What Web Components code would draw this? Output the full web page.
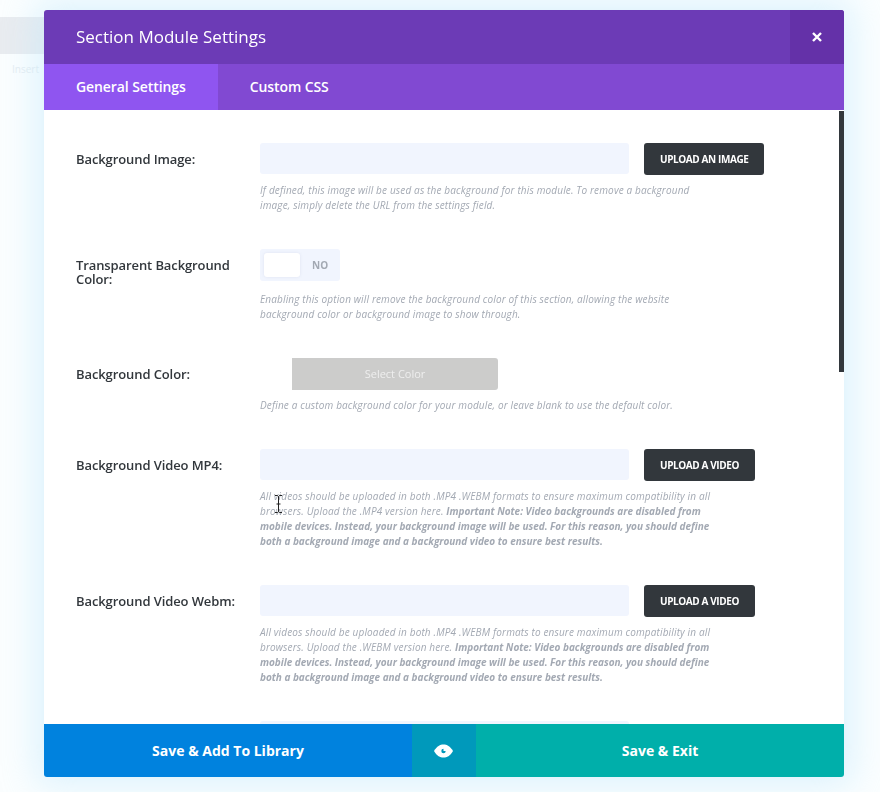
<!DOCTYPE html>
<html>
<head>
<meta charset="utf-8">
<title>Section Module Settings</title>
<style>
  html { background: #fff; }
  html, body { margin: 0; height: 100%; overflow: hidden; }
  body { font-family: "Open Sans", sans-serif; }
</style>
</head>
<body>
<template id="row-tpl">
  <style>
    :host { display: grid; grid-template-columns: 184px 1fr; margin-bottom: 36.5px; }
    .label { font-size: 13px; font-weight: 600; line-height: 14px; letter-spacing: -.1px; color: #32373c; padding-top: 9px; padding-right: 20px; }
    .control { display: flex; align-items: flex-start; gap: 15px; height: 32px; }
    .desc { width: 460px; margin-top: var(--desc-gap, 7.5px); font-size: 10px; line-height: 15px; font-style: italic; color: #a3a9b3; letter-spacing: .15px; }
    ::slotted(b) { font-weight: 700; letter-spacing: -.02px; }
  </style>
  <div class="label"><slot name="label"></slot></div>
  <div>
    <div class="control"><slot name="control"></slot></div>
    <div class="desc"><slot></slot></div>
  </div>
</template>

<script>
class PageBackdrop extends HTMLElement {
  constructor() {
    super();
    this.attachShadow({ mode: "open" });
    this.shadowRoot.innerHTML = `
      <style>
        :host { display: block; position: fixed; inset: 0; z-index: -1; background: #fbfeff; }
        .bar { width: 44px; height: 37px; margin-top: 17px; background: #e9ecf0; }
        .txt { font-size: 10px; line-height: 15px; color: #e6edf2; padding-left: 12px; }
      </style>
      <div class="bar"></div>
      <div class="txt" style="margin-top:8px">Insert</div>
    `;
  }
}
customElements.define("page-backdrop", PageBackdrop);

class ModalHeader extends HTMLElement {
  constructor() {
    super();
    this.attachShadow({ mode: "open" });
    this.shadowRoot.innerHTML = `
      <style>
        :host { display: flex; height: 54px; background: #6c3bb6; color: #fff; align-items: center; border-radius: 3px 3px 0 0; overflow: hidden; }
        h1 { flex: 1; margin: 0; padding: 0 0 2px 32px; font-size: 17px; font-weight: 400; }
        .close { width: 54px; height: 54px; background: #6431a8; display: flex; align-items: center; justify-content: center; }
      </style>
      <h1><slot></slot></h1>
      <div class="close">
        <svg width="10" height="10" viewBox="0 0 10 10"><path d="M1 1l8 8M9 1l-8 8" stroke="#fff" stroke-width="2.4" fill="none"/></svg>
      </div>
    `;
  }
}
customElements.define("modal-header", ModalHeader);

class ModalTabs extends HTMLElement {
  constructor() {
    super();
    this.attachShadow({ mode: "open" });
    this.shadowRoot.innerHTML = `
      <style>
        :host { display: flex; height: 46px; background: #8149d2; }
        ::slotted(span) { display: flex; align-items: center; padding: 0 32px 2px; font-size: 14px; font-weight: 600; letter-spacing: -.09px; color: #fff; }
        ::slotted(span.active) { background: #8f55f0; }
      </style>
      <slot></slot>
    `;
  }
}
customElements.define("modal-tabs", ModalTabs);

class SettingRow extends HTMLElement {
  constructor() {
    super();
    this.attachShadow({ mode: "open" });
    this.shadowRoot.appendChild(document.getElementById("row-tpl").content.cloneNode(true));
  }
}
customElements.define("setting-row", SettingRow);

class UploadField extends HTMLElement {
  constructor() {
    super();
    this.attachShadow({ mode: "open" });
    this.shadowRoot.innerHTML = `
      <style>
        :host { display: flex; gap: 15px; align-items: flex-start; }
        :host([bare]) .btn { display: none; }
        .input { width: 369px; height: 31px; background: #f1f5fe; border-radius: 3px; }
        .btn { height: 32px; padding: 0 16px; background: #32373c; border-radius: 3px; color: #fff; font-size: 10px; font-weight: 700; display: flex; align-items: center; white-space: nowrap; letter-spacing: -.4px; }
      </style>
      <div class="input"></div>
      <div class="btn"><slot></slot></div>
    `;
  }
}
customElements.define("upload-field", UploadField);

class ToggleSwitch extends HTMLElement {
  constructor() {
    super();
    this.attachShadow({ mode: "open" });
    this.shadowRoot.innerHTML = `
      <style>
        :host { display: flex; width: 80px; height: 32px; background: #f1f5fe; border-radius: 3px; align-items: center; box-sizing: border-box; padding-left: 4px; }
        .knob { width: 36px; height: 24px; background: #fff; border-radius: 3px; box-shadow: 0 0 3px rgba(120,130,160,.15); }
        .txt { margin-left: 12px; font-size: 10px; font-weight: 700; color: #a3a9b3; }
      </style>
      <div class="knob"></div>
      <div class="txt">NO</div>
    `;
  }
}
customElements.define("toggle-switch", ToggleSwitch);

class ColorPicker extends HTMLElement {
  constructor() {
    super();
    this.attachShadow({ mode: "open" });
    this.shadowRoot.innerHTML = `
      <style>
        :host { display: block; padding-left: 32px; }
        .btn { box-sizing: border-box; width: 206px; height: 32px; padding-bottom: 2px; background: #cccccb; border-radius: 0 3px 3px 0; color: #eeeeee; font-size: 11px; display: flex; align-items: center; justify-content: center; }
      </style>
      <div class="btn">Select Color</div>
    `;
  }
}
customElements.define("color-picker", ColorPicker);

class ModalFooter extends HTMLElement {
  constructor() {
    super();
    this.attachShadow({ mode: "open" });
    this.shadowRoot.innerHTML = `
      <style>
        :host { display: grid; grid-template-columns: 368px 64px 1fr; height: 53px; color: #fff; font-size: 14px; font-weight: 700; border-radius: 0 0 3px 3px; overflow: hidden; position: relative; }
        div { display: flex; align-items: center; justify-content: center; }
        .lib { background: #0082de; }
        .eye { background: #0099bb; padding-right: 2px; }
        .exit { background: #00afaa; }
      </style>
      <div class="lib">Save &amp; Add To Library</div>
      <div class="eye">
        <svg width="19" height="14" viewBox="0 0 19 14">
          <path d="M0 7C3 2 6 .5 9.500 .5S16 2 19 7c-3 5-6 6.500-9.500 6.500S3 12 0 7z" fill="#fff"/>
          <path d="M9.500 4.800a2.200 2.200 0 1 0 2.200 2.200H9.500z" fill="#0099bb"/>
        </svg>
      </div>
      <div class="exit">Save &amp; Exit</div>
    `;
  }
}
customElements.define("modal-footer", ModalFooter);

class TextCursor extends HTMLElement {
  constructor() {
    super();
    this.attachShadow({ mode: "open" });
    this.shadowRoot.innerHTML = `
      <style>
        :host { display: block; position: fixed; left: 275px; top: 495px; width: 7px; height: 18px; }
      </style>
      <svg width="7" height="18" viewBox="0 0 7 18"><path d="M0 .5h2.500L3.500 1.500 4.500 .5H7M3.500 1.500v15M0 17.500h2.500l1-1 1 1H7M1.500 9h4" stroke="#222" fill="none"/></svg>
    `;
  }
}
customElements.define("text-cursor", TextCursor);

class SettingsModal extends HTMLElement {
  constructor() {
    super();
    this.attachShadow({ mode: "open" });
    this.shadowRoot.innerHTML = `
      <style>
        :host { display: flex; flex-direction: column; width: 800px; height: 767px; margin: 10px 0 0 44px; background: #fff; position: relative; box-shadow: 0 0 34px 8px rgba(190,232,252,.5); border-radius: 3px; }
        .body { flex: 1; min-height: 0; overflow: hidden; padding: 33px 0 0 32px; position: relative; }
        .bar { position: absolute; right: 0; top: 1px; width: 5px; height: 261px; background: #32373c; }
      </style>
      <slot name="header"></slot>
      <slot name="tabs"></slot>
      <div class="body">
        <slot></slot>
        <div class="bar"></div>
      </div>
      <slot name="footer"></slot>
    `;
  }
}
customElements.define("settings-modal", SettingsModal);
</script>

<page-backdrop></page-backdrop>
<settings-modal>
  <modal-header slot="header">Section Module Settings</modal-header>
  <modal-tabs slot="tabs">
    <span class="active">General Settings</span>
    <span>Custom CSS</span>
  </modal-tabs>

  <setting-row>
    <span slot="label">Background Image:</span>
    <upload-field slot="control">UPLOAD AN IMAGE</upload-field>
    If defined, this image will be used as the background for this module. To remove a background image, simply delete the URL from the settings field.
  </setting-row>

  <setting-row style="--desc-gap: 10.5px">
    <span slot="label">Transparent Background Color:</span>
    <toggle-switch slot="control"></toggle-switch>
    Enabling this option will remove the background color of this section, allowing the website background color or background image to show through.
  </setting-row>

  <setting-row>
    <span slot="label">Background Color:</span>
    <color-picker slot="control"></color-picker>
    Define a custom background color for your module, or leave blank to use the default color.
  </setting-row>

  <setting-row>
    <span slot="label">Background Video MP4:</span>
    <upload-field slot="control">UPLOAD A VIDEO</upload-field>
    All videos should be uploaded in both .MP4 .WEBM formats to ensure maximum compatibility in all browsers. Upload the .MP4 version here. <b>Important Note: Video backgrounds are disabled from mobile devices. Instead, your background image will be used. For this reason, you should define both a background image and a background video to ensure best results.</b>
  </setting-row>

  <setting-row>
    <span slot="label">Background Video Webm:</span>
    <upload-field slot="control">UPLOAD A VIDEO</upload-field>
    All videos should be uploaded in both .MP4 .WEBM formats to ensure maximum compatibility in all browsers. Upload the .WEBM version here. <b>Important Note: Video backgrounds are disabled from mobile devices. Instead, your background image will be used. For this reason, you should define both a background image and a background video to ensure best results.</b>
  </setting-row>

  <setting-row>
    <upload-field slot="control" bare></upload-field>
  </setting-row>

  <modal-footer slot="footer"></modal-footer>
</settings-modal>
<text-cursor></text-cursor>
</body>
</html>
